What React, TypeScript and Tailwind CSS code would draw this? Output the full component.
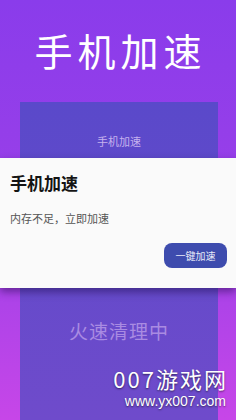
import React from 'react';

const cjk = { fontFamily: '"Noto Sans CJK SC", "Noto Sans", sans-serif' };

export default function App() {
  return (
    <div
      className="relative w-[236px] h-[420px] overflow-hidden flex flex-col bg-gradient-to-b from-[#8a3ceb] via-[#9a3fe8] to-[#c746e8]"
      style={cjk}
    >
      {/* Header */}
      <div className="h-[102px] flex items-center justify-center pb-[2px]">
        <h1 className="text-white text-[38px] leading-none tracking-[5px] pl-[5px] font-normal">手机加速</h1>
      </div>

      {/* Panel */}
      <div className="mx-[20px] w-[198px] flex-1 flex flex-col items-center bg-gradient-to-b from-[#5a49ca] to-[#6f4bcb]">
        <p className="mt-[31px] text-[11px] leading-[16px] text-[#c6b2ee]">手机加速</p>
        <p className="mt-[170px] text-[19px] leading-[24px] tracking-[1px] text-[#a98be2]">火速清理中</p>
      </div>

      {/* Dialog */}
      <div className="absolute left-0 top-[158px] w-[236px] h-[130px] bg-[#fafafa] shadow-[0_4px_8px_rgba(20,0,60,0.45)] flex flex-col">
        <h2 className="mt-[15px] ml-[10px] text-[17px] leading-[20px] font-bold text-[#141414]">手机加速</h2>
        <p className="mt-[17px] ml-[10px] text-[11px] leading-[16px] text-[#555555]">内存不足，立即加速</p>
        <div className="flex justify-end pr-[9px] mt-[17px]">
          <button className="w-[63px] h-[25px] rounded-[8px] bg-[#3e4cae] text-[10px] text-[#e8eaf8] flex items-center justify-center">
            一键加速
          </button>
        </div>
      </div>

      {/* Watermark */}
      <div className="absolute right-[8px] top-[367px] flex flex-col items-end gap-[5px] text-white [text-shadow:0_1px_2px_rgba(0,0,0,0.55)]">
        <span className="block text-[22px] leading-[22px] tracking-[2px]">007游戏网</span>
        <span className="block text-[14px] leading-[15px] pr-[2px]" style={{ fontFamily: '"Liberation Sans", sans-serif' }}>
          www.yx007.com
        </span>
      </div>
    </div>
  );
}
